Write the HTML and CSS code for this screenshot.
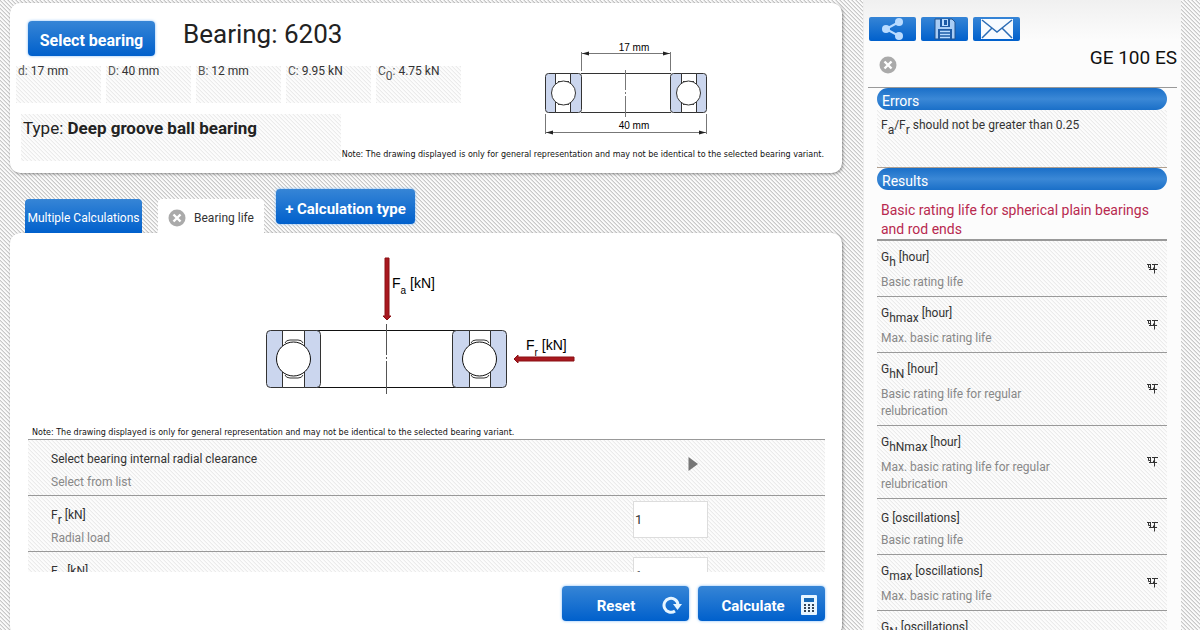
FILE: index.html
```html
<!DOCTYPE html>
<html lang="en">
<head>
  <meta charset="UTF-8" />
  <meta name="viewport" content="width=device-width, initial-scale=1.0"/>
  <title>Bearing calculator</title>
  <link rel="stylesheet" href="styles.css">
</head>
<body>
  <!-- shared icons -->
  <svg class="sprite" aria-hidden="true">
    <symbol id="icon-close" viewBox="0 0 18 18">
      <circle cx="9" cy="9" r="8.5" fill="#aaa"/>
      <path d="M5.5 5.5l7 7M12.500 5.500l-7 7" stroke="#fff" stroke-width="2.4"/>
    </symbol>
    <symbol id="icon-unit" viewBox="0 0 11 12">
      <path d="M0 1.500h3M1.500 2v2.500h2M3.500 1v6M5 1.500h6M6.500 4.500v2M2 6.500h8M7.500 1.500v9" fill="none" stroke="#333" stroke-width="1"/>
    </symbol>
  </svg>

  <main class="main">
    <section class="panel summary">
      <div class="overview">
        <div class="headline">
          <button type="button" class="btn select-btn">Select bearing</button>
          <h1>Bearing: 6203</h1>
        </div>
        <ul class="specs">
          <li><span>d:</span> 17 mm</li>
          <li><span>D:</span> 40 mm</li>
          <li><span>B:</span> 12 mm</li>
          <li><span>C:</span> 9.95 kN</li>
          <li><span>C<sub>0</sub>:</span> 4.75 kN</li>
        </ul>
      </div>
      <p class="type">Type: <b>Deep groove ball bearing</b></p>
      <svg class="drawing" width="164" height="92" viewBox="0 0 164 92">
        <g fill="none" stroke="#333" stroke-width="1">
          <path d="M37.500 8v19M126.500 8v19M37 9.500h90" stroke="#777"/>
          <path d="M1.500 70v20M162.500 70v20M1 88.500h162" stroke="#777"/>
          <path d="M37 29.500h90M37 68.500h90"/>
          <rect x="1.500" y="29.500" width="36" height="39" rx="3" fill="#cbd6ee"/>
          <rect x="126.500" y="29.500" width="36" height="39" rx="3" fill="#cbd6ee"/>
          <path d="M11.500 29.500h15v39h-15zM137.500 29.500h15v39h-15z" fill="#fff"/>
          <path d="M14 37.500h11M14 60.500h11M139 37.500h11M139 60.500h11"/>
          <circle cx="19.500" cy="49" r="12" fill="#fff"/>
          <circle cx="144.500" cy="49" r="12" fill="#fff"/>
          <path d="M81.500 26v20M81.500 48v2M81.500 52v21" stroke="#777"/>
        </g>
        <path d="M38 9.500l7-2v4zM126 9.500l-7-2v4zM2 88.500l7-2v4zM162 88.500l-7-2v4z" fill="#222"/>
        <text x="90" y="7" class="dim">17 mm</text>
        <text x="90" y="85" class="dim">40 mm</text>
      </svg>
      <p class="note">Note: The drawing displayed is only for general representation and may not be identical to the selected bearing variant.</p>
    </section>

    <nav class="tabs">
      <button type="button" class="tab">Multiple Calculations</button>
      <button type="button" class="tab active">
        <svg width="18" height="18"><use href="#icon-close"/></svg>
        Bearing life
      </button>
      <button type="button" class="btn add-btn">+ Calculation type</button>
    </nav>

    <section class="panel calc">
      <svg class="diagram" width="312" height="140" viewBox="0 0 312 140">
        <g fill="none" stroke="#333" stroke-width="1">
          <path d="M50 74.500h150M50 131.500h150" stroke="#111"/>
          <rect x="2.500" y="74.500" width="54" height="57" rx="4" fill="#cbd6ee"/>
          <rect x="188.500" y="74.500" width="54" height="57" rx="4" fill="#cbd6ee"/>
          <path d="M18.500 74.500h22v57h-22zM205.500 74.500h21v57h-21z" fill="#fff"/>
          <path d="M21 87q1-3 5-3h8q4 0 5 3M21 119q1 3 5 3h8q4 0 5-3"/>
          <path d="M207 87q1-3 5-3h8q4 0 5 3M207 119q1 3 5 3h8q4 0 5-3"/>
          <circle cx="29.500" cy="103" r="17" fill="#fff" stroke="#111"/>
          <circle cx="215.500" cy="103" r="17" fill="#fff" stroke="#111"/>
          <path d="M122.500 68v31M122.500 101v2M122.500 105v33" stroke="#555"/>
        </g>
        <path d="M121 2h4v58h2l-4 4-4-4h2zM310 101v4h-56v2l-4-4 4-4v2z" fill="#a8181f" stroke="#8b1015" stroke-width="1"/>
        <text x="128" y="32" class="force">F<tspan dy="6" class="force-sub">a</tspan><tspan dy="-6"> [kN]</tspan></text>
        <text x="262" y="94" class="force">F<tspan dy="6" class="force-sub">r</tspan><tspan dy="-6"> [kN]</tspan></text>
      </svg>
      <p class="note">Note: The drawing displayed is only for general representation and may not be identical to the selected bearing variant.</p>

      <form id="inputs">
        <div class="params">
          <div class="param">
            <div class="param-text">
              <div class="param-name">Select bearing internal radial clearance</div>
              <div class="param-desc">Select from list</div>
            </div>
            <button type="button" class="open-btn" aria-label="Open list">
              <svg width="10" height="14"><path d="M0.500 0v14L10 7z" fill="#777"/></svg>
            </button>
          </div>
          <div class="param">
            <div class="param-text">
              <label class="param-name" for="fr">F<sub>r</sub> [kN]</label>
              <div class="param-desc">Radial load</div>
            </div>
            <input type="text" id="fr" name="fr" value="1">
          </div>
          <div class="param">
            <div class="param-text">
              <label class="param-name" for="fa">F<sub>a</sub> [kN]</label>
              <div class="param-desc">Axial load</div>
            </div>
            <input type="text" id="fa" name="fa" value="1">
          </div>
        </div>
        <div class="actions">
          <button type="reset" class="btn action-btn">
            <span>Reset</span>
            <svg width="20" height="18" viewBox="0 0 20 18">
              <path d="M13 15A7 7 0 1 1 16 9" fill="none" stroke="#e6f5ff" stroke-width="3"/>
              <path d="M11 8h9l-4.500 6z" fill="#e6f5ff"/>
            </svg>
          </button>
          <button type="submit" class="btn action-btn">
            <span>Calculate</span>
            <svg width="18" height="22" viewBox="0 0 18 22">
              <rect x="1" y="1" width="16" height="20" rx="1" fill="#e6f5ff"/>
              <path d="M4 4h10v4H4z" fill="#1668b4"/>
              <path d="M4 10h2v2H4zM8 10h2v2H8zM12 10h2v2h-2zM4 13h2v2H4zM8 13h2v2H8zM12 13h2v2h-2zM4 16h2v2H4zM8 16h2v2H8zM12 16h2v2h-2z" fill="#345"/>
            </svg>
          </button>
        </div>
      </form>
    </section>
  </main>

  <aside class="sidebar">
    <div class="tools">
      <button type="button" class="tool-btn" aria-label="Share">
        <svg width="24" height="22" viewBox="0 0 24 22">
          <path d="M18 4L5 11l13 7" fill="none" stroke="#b9dbff" stroke-width="2"/>
          <circle cx="18" cy="4" r="4" fill="#b9dbff"/>
          <circle cx="5" cy="11" r="4" fill="#b9dbff"/>
          <circle cx="18" cy="18" r="4" fill="#b9dbff"/>
        </svg>
      </button>
      <button type="button" class="tool-btn" aria-label="Save">
        <svg width="22" height="22" viewBox="0 0 22 22">
          <path d="M1 1h17l3 3v17H1z" fill="#a9cdf5" stroke="#23538c"/>
          <path d="M6 1h10v8H6z" fill="#1d5ba6"/>
          <path d="M8 1h6v7H8z" fill="#b9dbff"/>
          <path d="M10 2h3v5h-3z" fill="#1d5ba6"/>
          <path d="M4 11h14v10H4z" fill="#1d5ba6"/>
          <path d="M6 13.500h10M6 16.500h10M6 19.500h10" stroke="#b9dbff" stroke-width="1.500"/>
        </svg>
      </button>
      <button type="button" class="tool-btn" aria-label="Send mail">
        <svg width="32" height="22" viewBox="0 0 32 22">
          <path d="M0 1h32v20H0z" fill="#f7fbff"/>
          <path d="M1 2l15 12L31 2M1 20l10-10M31 20L21 10" fill="none" stroke="#2b6cb5" stroke-width="1.500"/>
        </svg>
      </button>
    </div>

    <header class="calc-head">
      <button type="button" class="close-btn" aria-label="Close">
        <svg width="18" height="18"><use href="#icon-close"/></svg>
      </button>
      <h2>GE 100 ES</h2>
    </header>

    <div class="output">
      <h3>Errors</h3>
      <p class="error">F<sub>a</sub>/F<sub>r</sub> should not be greater than 0.25</p>

      <h3>Results</h3>
      <h4>Basic rating life for spherical plain bearings and rod ends</h4>
      <ul class="results">
        <li>
          <div class="result-text">
            <div class="result-name with-sub">G<sub>h</sub> [hour]</div>
            <div class="result-desc">Basic rating life</div>
          </div>
          <svg width="11" height="12"><use href="#icon-unit"/></svg>
        </li>
        <li>
          <div class="result-text">
            <div class="result-name with-sub">G<sub>hmax</sub> [hour]</div>
            <div class="result-desc">Max. basic rating life</div>
          </div>
          <svg width="11" height="12"><use href="#icon-unit"/></svg>
        </li>
        <li>
          <div class="result-text">
            <div class="result-name with-sub">G<sub>hN</sub> [hour]</div>
            <div class="result-desc">Basic rating life for regular relubrication</div>
          </div>
          <svg width="11" height="12"><use href="#icon-unit"/></svg>
        </li>
        <li>
          <div class="result-text">
            <div class="result-name with-sub">G<sub>hNmax</sub> [hour]</div>
            <div class="result-desc">Max. basic rating life for regular relubrication</div>
          </div>
          <svg width="11" height="12"><use href="#icon-unit"/></svg>
        </li>
        <li>
          <div class="result-text">
            <div class="result-name">G [oscillations]</div>
            <div class="result-desc">Basic rating life</div>
          </div>
          <svg width="11" height="12"><use href="#icon-unit"/></svg>
        </li>
        <li>
          <div class="result-text">
            <div class="result-name with-sub">G<sub>max</sub> [oscillations]</div>
            <div class="result-desc">Max. basic rating life</div>
          </div>
          <svg width="11" height="12"><use href="#icon-unit"/></svg>
        </li>
        <li>
          <div class="result-text">
            <div class="result-name with-sub">G<sub>N</sub> [oscillations]</div>
            <div class="result-desc">Basic rating life for regular relubrication</div>
          </div>
          <svg width="11" height="12"><use href="#icon-unit"/></svg>
        </li>
      </ul>
    </div>
  </aside>
</body>
</html>
```

FILE: styles.css
```css
* {
  box-sizing: border-box;
}

body {
  margin: 0;
  height: 100vh;
  overflow: hidden;
  display: flex;
  gap: 21px;
  padding: 0 19px 0 10px;
  font-family: Roboto, "Liberation Sans", sans-serif;
  font-size: 12px;
  color: #333;
  background: linear-gradient(45deg, #fafafa 31%, #e2e2e2 31% 44%, #c8c8c8 44% 56%, #fafafa 56% 81%, #e2e2e2 81%);
  background-size: 4px 4px;
}

h1, h2, h3, h4, p, ul {
  margin: 0;
  padding: 0;
  font-weight: normal;
}

ul {
  list-style: none;
}

button, input {
  font-family: inherit;
}

button {
  border: none;
  padding: 0;
  background: none;
  cursor: pointer;
}

sub {
  font-size: 12px;
  line-height: 0;
  vertical-align: -5px;
}

.sprite {
  display: none;
}

.main {
  flex: 1;
  padding-top: 3px;
}

.panel {
  background: white;
  border-radius: 10px;
  box-shadow: 1px 1px 3px rgba(0,0,0,0.4);
}

.btn {
  height: 35px;
  border-radius: 4px;
  color: white;
  font-size: 16px;
  font-weight: bold;
  background: linear-gradient(#3685d6, #0060cc);
  box-shadow: 0 0 3px #7db8f5;
}

/* bearing summary */
.summary {
  display: grid;
  grid-template-columns: 331px 120px 1fr;
  grid-template-rows: 111px 35px 24px;
}

.overview {
  grid-area: 1 / 1 / 2 / 3;
  padding: 18px 0 0 6px;
}

.headline {
  display: flex;
  gap: 28px;
  padding-left: 12px;
  margin-bottom: 10px;
}

.select-btn {
  width: 127px;
  padding-top: 3px;
}

h1 {
  font-size: 26px;
  line-height: 26px;
  color: #222;
}

.specs {
  display: flex;
  gap: 5px;
}

.specs li {
  width: 85px;
  height: 37px;
  padding-left: 2px;
  line-height: 10px;
}

.specs span {
  color: #555;
}

.specs li, .type, .param, .error, .results li {
  background: linear-gradient(45deg, #fcfcfc 31%, #f6f6f6 31% 44%, #ebebeb 44% 56%, #fcfcfc 56% 81%, #f6f6f6 81%);
  background-size: 4px 4px;
}

.type {
  grid-area: 2 / 1 / 4 / 2;
  margin: 0 0 12px 11px;
  padding-left: 2px;
  font-size: 17px;
  line-height: 28px;
  color: #222;
}

.drawing {
  grid-area: 1 / 3 / 3 / 4;
  margin: 41px 0 0 83px;
  overflow: visible;
}

.dim {
  font: 10px "Liberation Sans", sans-serif;
  text-anchor: middle;
}

.note {
  font-family: "DejaVu Sans", sans-serif;
  font-size: 8px;
  line-height: 12px;
  color: #111;
}

.summary .note {
  grid-area: 3 / 2 / 4 / 4;
  text-align: right;
  padding-right: 18px;
}

/* tabs */
.tabs {
  display: flex;
  align-items: flex-end;
  height: 44px;
  margin-top: 16px;
  padding-left: 15px;
}

.tab {
  height: 34px;
  width: 117px;
  padding-top: 3px;
  border-radius: 4px 4px 0 0;
  font-size: 12px;
  color: white;
  background: linear-gradient(#3685d6, #0060cc);
}

.tab.active {
  display: flex;
  align-items: center;
  justify-content: center;
  gap: 8px;
  width: 106px;
  margin-left: 16px;
  color: #333;
  background: white;
}

.add-btn {
  width: 139px;
  padding-top: 4px;
  font-size: 15px;
  align-self: flex-start;
  margin-left: 12px;
}

/* calculation inputs */
.calc {
  padding: 23px 17px 15px 18px;
}

.diagram {
  display: block;
  margin: 0 0 16px 236px;
}

.force {
  font: 14px "Liberation Sans", sans-serif;
}

.force-sub {
  font-size: 10px;
}

.calc .note {
  padding: 15px 0 0 4px;
}

.params {
  height: 133px;
  overflow: hidden;
}

.param {
  display: flex;
  justify-content: space-between;
  height: 56px;
  padding: 5px 117px 0 23px;
  border-top: 1px solid #999;
}

.param-name {
  display: block;
  line-height: 28px;
}

.param-desc {
  line-height: 18px;
  color: #888;
}

.open-btn {
  width: 30px;
  height: 40px;
}

.param input {
  width: 75px;
  height: 37px;
  padding: 0 1px;
  border: 1px solid #ddd;
  font-size: 13px;
  color: #333;
  background: white;
}

.actions {
  display: flex;
  justify-content: flex-end;
  gap: 9px;
  margin-top: 14px;
}

.action-btn {
  display: flex;
  align-items: center;
  width: 127px;
  padding: 2px 7px 0 8px;
  font-size: 15px;
}

.action-btn span {
  flex: 1;
  padding-top: 2px;
}

/* sidebar */
.sidebar {
  width: 318px;
  padding-top: 17px;
  background: linear-gradient(#f0f0f0, #fcfcfc 40px);
  border-left: 1px solid #eee;
}

.tools {
  display: flex;
  gap: 5px;
  padding-left: 5px;
}

.tool-btn {
  display: flex;
  align-items: center;
  justify-content: center;
  width: 47px;
  height: 24px;
  border-radius: 2px;
  background: linear-gradient(#3685d6, #0060cc);
}

.calc-head {
  display: flex;
  justify-content: space-between;
  height: 47px;
  margin: 0 4px;
  padding: 4px 0 0 11px;
  border-bottom: 1px solid #999;
}

h2 {
  font-size: 19px;
  line-height: 26px;
  color: #111;
}

.close-btn {
  height: 18px;
  margin-top: 11px;
}

.output {
  padding: 0 14px 0 13px;
}

h3 {
  height: 22px;
  padding: 2px 5px 0;
  border-radius: 11px;
  font-size: 14px;
  line-height: 22px;
  color: white;
  background: linear-gradient(#1a6fc8, #3b88d6 50%, #1a6fc8);
}

.error {
  height: 58px;
  padding: 4px 4px 0;
  line-height: 22px;
  border-bottom: 1px solid #b0a090;
}

h4 {
  padding: 11px 4px 0;
  font-size: 14px;
  line-height: 19px;
  color: #b8294f;
  border-bottom: 2px solid #999;
}

.results li {
  display: flex;
  align-items: center;
  justify-content: space-between;
  padding: 5px 9px 5px 4px;
  border-bottom: 1px solid #999;
}

.result-text {
  width: 190px;
}

.result-name {
  line-height: 28px;
}

.result-name.with-sub {
  line-height: 22px;
  padding-bottom: 6px;
}

.result-desc {
  line-height: 17px;
  color: #888;
}
```
